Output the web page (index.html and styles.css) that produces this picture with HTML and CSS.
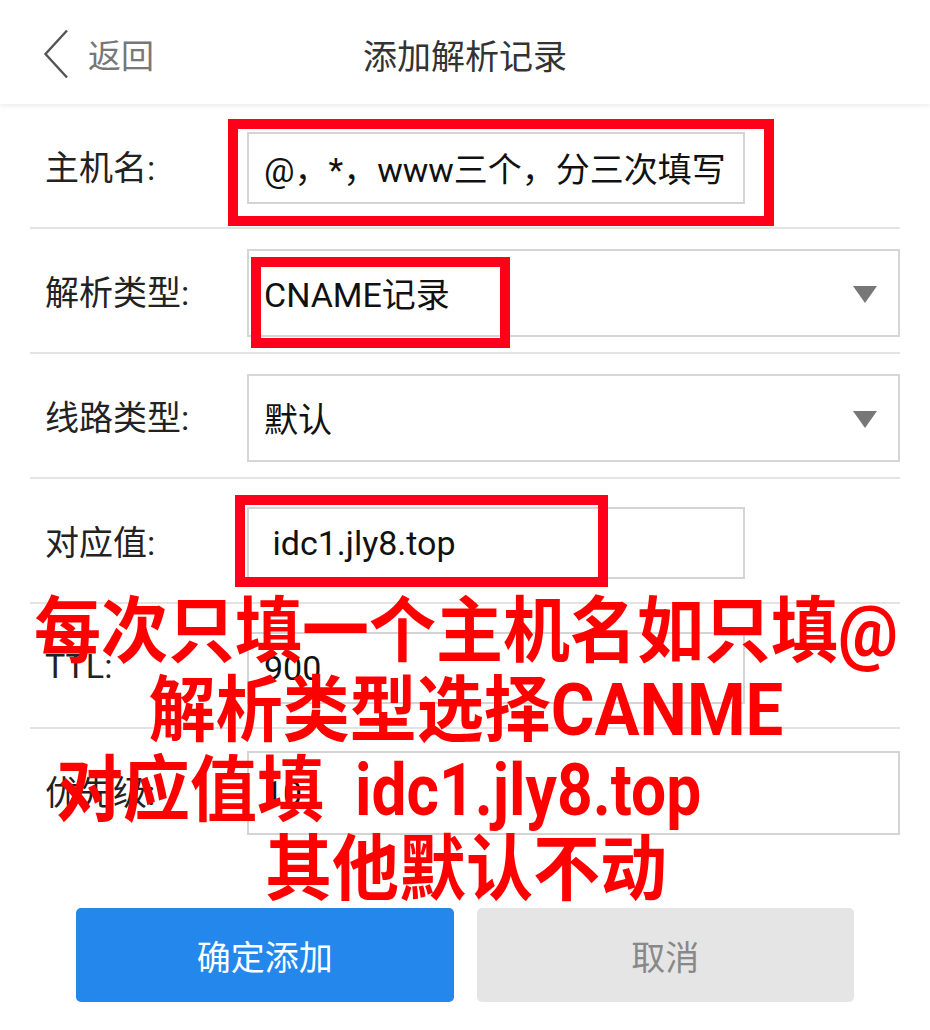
FILE: index.html
```html
<!DOCTYPE html>
<html lang="zh-CN">
<head>
<meta charset="UTF-8">
<meta name="viewport" content="width=device-width, initial-scale=1.0">
<title>添加解析记录</title>
<link rel="stylesheet" href="styles.css">
</head>
<body>

<div class="page">
  <header class="topbar">
    <a class="back" href="#">
      <svg class="back-icon" width="26" height="50" viewBox="0 0 26 50">
        <path d="M24 1.5 L2.5 25 L24 48.5" fill="none" stroke="#555" stroke-width="2.4"/>
      </svg>
      <span>返回</span>
    </a>
    <h1>添加解析记录</h1>
    <div></div>
  </header>

  <form class="form">
    <div class="row">
      <label>主机名:</label>
      <div class="field">
        <input class="text-input" type="text" value="@，*，www三个，分三次填写">
        <span class="mark mark-host"></span>
      </div>
    </div>

    <div class="row">
      <label>解析类型:</label>
      <div class="field field-wide">
        <div class="select-box">
          <select>
            <option>CNAME记录</option>
            <option>A记录</option>
            <option>MX记录</option>
            <option>TXT记录</option>
          </select>
          <span class="arrow"></span>
        </div>
        <span class="mark mark-type"></span>
      </div>
    </div>

    <div class="row">
      <label>线路类型:</label>
      <div class="field field-wide">
        <div class="select-box">
          <select>
            <option>默认</option>
            <option>电信</option>
            <option>联通</option>
          </select>
          <span class="arrow"></span>
        </div>
      </div>
    </div>

    <div class="row">
      <label>对应值:</label>
      <div class="field">
        <input class="text-input" type="text" value=" idc1.jly8.top">
        <span class="mark mark-value"></span>
      </div>
    </div>

    <div class="row">
      <label>TTL:</label>
      <div class="field">
        <input class="text-input" type="text" value="900">
      </div>
    </div>

    <div class="row row-last">
      <label>优先级:</label>
      <div class="field field-wide">
        <input class="text-input tall" type="text" value="10">
      </div>
    </div>
  </form>

  <div class="actions">
    <button class="btn btn-primary" type="button">确定添加</button>
    <button class="btn btn-cancel" type="button">取消</button>
  </div>

  <!-- annotation laid over the form -->
  <div class="note">
    <div>每次只填一个主机名如只填@</div>
    <div>解析类型选择CANME</div>
    <div class="note-left">对应值填 <span class="note-domain">idc1.jly8.top</span></div>
    <div>其他默认不动</div>
  </div>
</div>

</body>
</html>
```

FILE: styles.css
```css
body {
  margin: 0;
  background-color: #fff;
  font-family: "Roboto", "Noto Sans CJK SC", sans-serif;
  color: #222;
}
.page {
  position: relative;
  width: 930px;
  height: 1030px;
  overflow: hidden;
}
.topbar {
  display: grid;
  grid-template-columns: 1fr auto 1fr;
  align-items: center;
  height: 104px;
  background-color: #fff;
  box-shadow: 0 2px 5px rgba(0, 0, 0, 0.08);
  position: relative;
  z-index: 1;
}
.back {
  display: flex;
  align-items: center;
  gap: 19px;
  padding-left: 43px;
  padding-top: 4px;
  color: #777;
  font-size: 33px;
  text-decoration: none;
}
.back-icon {
  display: block;
}
.topbar h1 {
  margin: 0;
  padding-top: 4px;
  font-size: 34px;
  font-weight: 400;
  color: #333;
}
.form {
  margin: 0 30px;
}
.row {
  display: flex;
  align-items: center;
  box-sizing: border-box;
  height: 125px;
  padding-top: 4px;
  border-bottom: 2px solid #e3e3e3;
}
.row-last {
  border-bottom: none;
  height: 123px;
}
.row label {
  width: 202px;
  padding-left: 15px;
  padding-bottom: 4px;
  font-size: 34px;
  color: #222;
}
.field {
  position: relative;
  width: 498px;
}
.field-wide {
  flex: 1;
}
.text-input {
  display: block;
  box-sizing: border-box;
  width: 100%;
  height: 72px;
  padding: 0 8px 0 15px;
  border: 2px solid #d4d4d4;
  border-radius: 0;
  font-family: inherit;
  font-size: 34px;
  color: #111;
  background-color: #fff;
  outline: none;
}
.text-input.tall {
  height: 84px;
}
.select-box {
  display: flex;
  align-items: center;
  box-sizing: border-box;
  height: 88px;
  border: 2px solid #d6d6d6;
  padding-right: 21px;
}
.select-box select {
  flex: 1;
  appearance: none;
  -webkit-appearance: none;
  border: none;
  background: transparent;
  padding: 4px 15px 0;
  font-family: inherit;
  font-size: 34px;
  color: #111;
  outline: none;
}
.arrow {
  width: 0;
  height: 0;
  margin-top: 4px;
  border-left: 12px solid transparent;
  border-right: 12px solid transparent;
  border-top: 17px solid #777;
}
.mark {
  position: absolute;
  border: 10px solid #fe0019;
  pointer-events: none;
}
.mark-host {
  left: -19px;
  top: -13px;
  width: 526px;
  height: 87px;
}
.mark-type {
  left: 4px;
  top: 8px;
  width: 239px;
  height: 71px;
}
.mark-value {
  left: -12px;
  top: -12px;
  width: 353px;
  height: 72px;
}
.actions {
  display: flex;
  gap: 23px;
  padding: 0 76px;
  margin-top: 56px;
}
.btn {
  flex: 1;
  height: 94px;
  border: none;
  border-radius: 5px;
  font-family: inherit;
  font-size: 34px;
}
.btn-primary {
  background-color: #2387eb;
  color: #fff;
}
.btn-cancel {
  background-color: #e5e5e5;
  color: #888;
}
.note {
  position: absolute;
  left: 0;
  right: 0;
  top: 592px;
  padding-left: 2px;
  text-align: center;
  font-family: "Roboto", "Noto Sans CJK SC", sans-serif;
  font-size: 67px;
  font-weight: 700;
  line-height: 74px;
  color: #ff0000;
  transform: scaleY(1.07);
  transform-origin: center top;
  z-index: 2;
}
.note-left {
  text-align: left;
  padding-left: 54px;
}
.note-domain {
  display: inline-block;
  margin-left: 14px;
  font-size: 67px;
  transform: scaleX(0.93);
  transform-origin: left center;
}
```
